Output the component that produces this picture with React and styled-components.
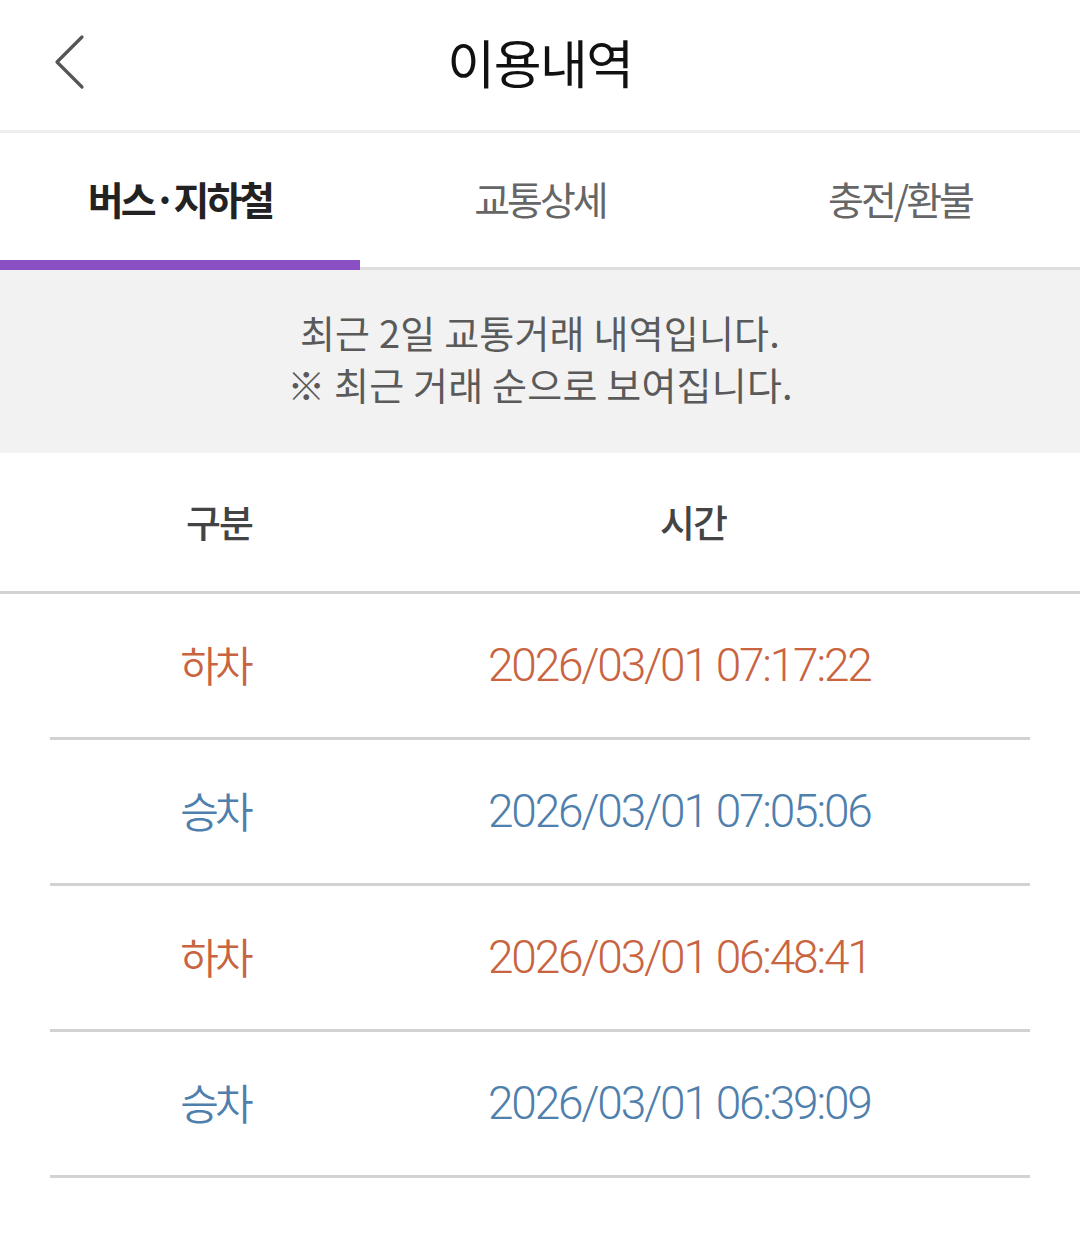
import React from "react";
import styled, { createGlobalStyle } from "styled-components";

const GlobalStyle = createGlobalStyle`
  html, body {
    margin: 0;
    padding: 0;
    background: #fff;
  }
  body {
    font-family: "Noto Sans CJK KR", "Noto Sans", sans-serif;
  }
`;

const Page = styled.div`
  width: 1080px;
  min-height: 1236px;
  background: #fff;
`;

//header with back arrow and title
const Header = styled.div`
  height: 130px;
  display: flex;
  align-items: center;
  justify-content: center;
  position: relative;
  border-bottom: 3px solid #eeeeee;
`;

const BackButton = styled.button`
  position: absolute;
  left: 48px;
  top: 30px;
  width: 44px;
  height: 64px;
  padding: 0;
  border: none;
  background: none;
  display: flex;
  align-items: center;
  justify-content: center;
`;

const Title = styled.h1`
  margin: 0;
  font-size: 52px;
  font-weight: 400;
  letter-spacing: -1.5px;
  color: #111;
  transform: translateY(-4px);
`;

const Tabs = styled.div`
  display: grid;
  grid-template-columns: repeat(3, 1fr);
  height: 134px;
  border-bottom: 3px solid #dedede;
`;

const Tab = styled.div`
  display: flex;
  align-items: center;
  justify-content: center;
  position: relative;
  font-size: 39px;
  letter-spacing: -3px;
  font-weight: ${(p) => (p.active ? 700 : 400)};
  color: ${(p) => (p.active ? "#222" : "#666")};
  padding-bottom: 4px;

  &::after {
    content: "";
    display: ${(p) => (p.active ? "block" : "none")};
    position: absolute;
    left: 0;
    right: 0;
    bottom: -3px;
    height: 10px;
    background: #8a4fc2;
  }
`;

const Notice = styled.div`
  background: #f2f2f2;
  height: 183px;
  display: flex;
  flex-direction: column;
  align-items: center;
  justify-content: center;
  font-size: 38px;
  line-height: 52px;
  color: #5a5a5a;
  letter-spacing: 0.2px;
  padding-bottom: 8px;
  box-sizing: border-box;
`;

const TableHead = styled.div`
  display: grid;
  grid-template-columns: 438px 1fr;
  height: 138px;
  align-items: center;
  border-bottom: 3px solid #d2d2d2;
  font-size: 38px;
  font-weight: 500;
  color: #444;
  letter-spacing: -2px;
`;

const HeadCell = styled.div`
  text-align: ${(p) => (p.left ? "left" : "center")};
  padding-left: ${(p) => (p.left ? "222px" : "0")};
  padding-bottom: 4px;
`;

const Rows = styled.div`
  padding: 0 50px;
`;

const Row = styled.div`
  display: grid;
  grid-template-columns: 330px 1fr;
  align-items: center;
  height: 143px;
  border-bottom: 3px solid #d2d2d2;
  color: ${(p) => (p.type === "off" ? "#c8643f" : "#4f7fad")};
`;

const TypeCell = styled.div`
  text-align: center;
  font-size: 42px;
  font-weight: 350;
  letter-spacing: -4px;
  padding-bottom: 4px;
`;

const TimeCell = styled.div`
  padding-left: 108px;
  font-family: Roboto, "Noto Sans", sans-serif;
  font-size: 46px;
  font-weight: 300;
  letter-spacing: -2.2px;
  padding-bottom: 2px;
`;

const records = [
  { type: "off", time: "2026/03/01 07:17:22" },
  { type: "on", time: "2026/03/01 07:05:06" },
  { type: "off", time: "2026/03/01 06:48:41" },
  { type: "on", time: "2026/03/01 06:39:09" },
];

const App = () => {
  return (
    <Page>
      <GlobalStyle />
      <Header>
        <BackButton>
          <svg width="34" height="56" viewBox="0 0 34 56">
            <polyline
              points="29,3 4,28 29,53"
              fill="none"
              stroke="#555"
              strokeWidth="3.2"
              strokeLinecap="round"
              strokeLinejoin="round"
            />
          </svg>
        </BackButton>
        <Title>이용내역</Title>
      </Header>
      <Tabs>
        <Tab active>버스·지하철</Tab>
        <Tab>교통상세</Tab>
        <Tab>충전/환불</Tab>
      </Tabs>
      <Notice>
        <div>최근 2일 교통거래 내역입니다.</div>
        <div>※ 최근 거래 순으로 보여집니다.</div>
      </Notice>
      <TableHead>
        <HeadCell>구분</HeadCell>
        <HeadCell left>시간</HeadCell>
      </TableHead>
      <Rows>
        {records.map((r) => (
          <Row key={r.time} type={r.type}>
            <TypeCell>{r.type === "off" ? "하차" : "승차"}</TypeCell>
            <TimeCell>{r.time}</TimeCell>
          </Row>
        ))}
      </Rows>
    </Page>
  );
};

export default App;
